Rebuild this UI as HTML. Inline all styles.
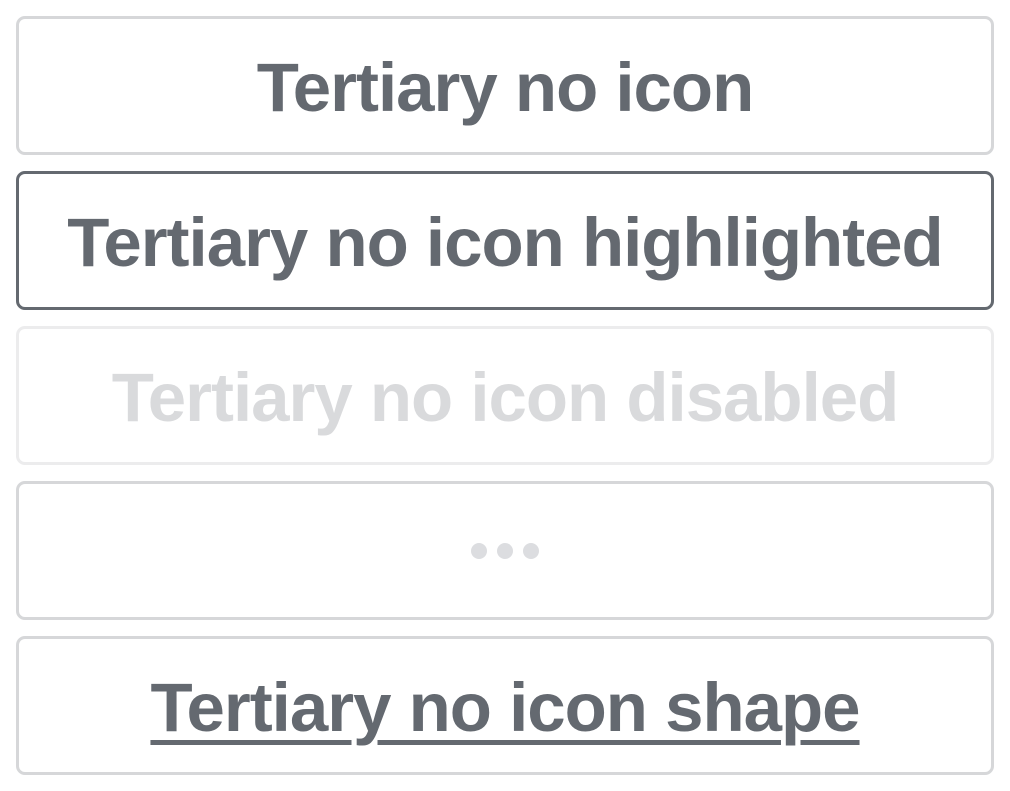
<!DOCTYPE html>
<html><head><style>
html,body{margin:0;padding:0;background:#fff;width:1010px;height:791px;overflow:hidden}
.b{position:absolute;left:16px;width:972px;height:133px;border:3px solid #d6d7d9;border-radius:9px;box-sizing:content-box;display:flex;align-items:center;justify-content:center;font-family:"Liberation Sans",sans-serif;font-weight:bold;font-size:69px;color:#646970;letter-spacing:-1px}
.h{border-color:#646970}
.d{border-color:#ececed;color:#d9dadc}
.u{text-decoration:underline;text-decoration-thickness:5px;text-underline-offset:9px}
.dot{width:16px;height:16px;border-radius:50%;background:#dcdde0;margin:0 5px}
</style></head><body>
<div class="b" style="top:16px"><span style="margin-top:4px">Tertiary no icon</span></div>
<div class="b h" style="top:171px"><span style="margin-top:4px">Tertiary no icon highlighted</span></div>
<div class="b d" style="top:326px"><span style="margin-top:4px">Tertiary no icon disabled</span></div>
<div class="b" style="top:481px"><div class="dot"></div><div class="dot"></div><div class="dot"></div></div>
<div class="b" style="top:636px"><span class="u" style="margin-top:4px">Tertiary no icon shape</span></div>
</body></html>
